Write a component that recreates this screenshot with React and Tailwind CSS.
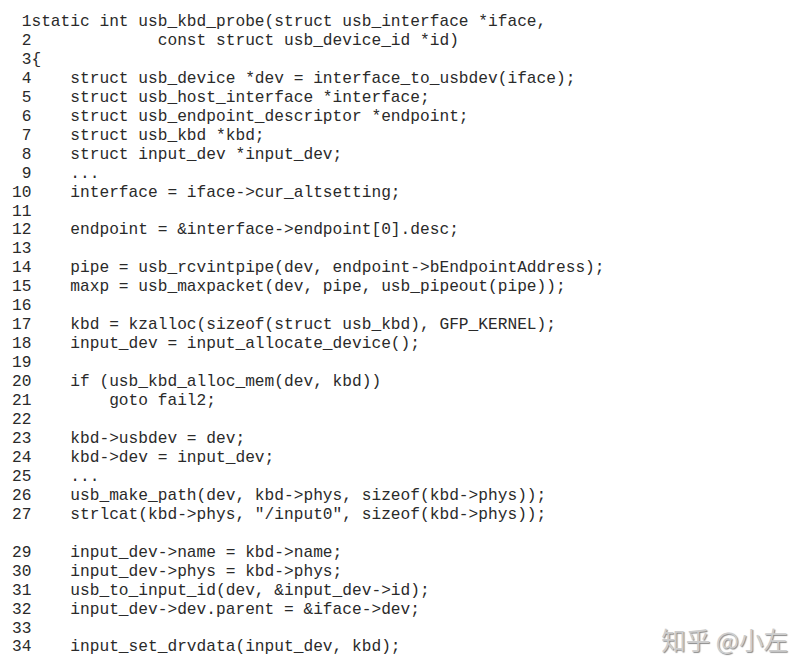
import React from "react";

const lines = [
  [1, "static int usb_kbd_probe(struct usb_interface *iface,"],
  [2, "             const struct usb_device_id *id)"],
  [3, "{"],
  [4, "    struct usb_device *dev = interface_to_usbdev(iface);"],
  [5, "    struct usb_host_interface *interface;"],
  [6, "    struct usb_endpoint_descriptor *endpoint;"],
  [7, "    struct usb_kbd *kbd;"],
  [8, "    struct input_dev *input_dev;"],
  [9, "    ..."],
  [10, "    interface = iface->cur_altsetting;"],
  [11, ""],
  [12, "    endpoint = &interface->endpoint[0].desc;"],
  [13, ""],
  [14, "    pipe = usb_rcvintpipe(dev, endpoint->bEndpointAddress);"],
  [15, "    maxp = usb_maxpacket(dev, pipe, usb_pipeout(pipe));"],
  [16, ""],
  [17, "    kbd = kzalloc(sizeof(struct usb_kbd), GFP_KERNEL);"],
  [18, "    input_dev = input_allocate_device();"],
  [19, ""],
  [20, "    if (usb_kbd_alloc_mem(dev, kbd))"],
  [21, "        goto fail2;"],
  [22, ""],
  [23, "    kbd->usbdev = dev;"],
  [24, "    kbd->dev = input_dev;"],
  [25, "    ..."],
  [26, "    usb_make_path(dev, kbd->phys, sizeof(kbd->phys));"],
  [27, '    strlcat(kbd->phys, "/input0", sizeof(kbd->phys));'],
  [null, ""],
  [29, "    input_dev->name = kbd->name;"],
  [30, "    input_dev->phys = kbd->phys;"],
  [31, "    usb_to_input_id(dev, &input_dev->id);"],
  [32, "    input_dev->dev.parent = &iface->dev;"],
  [33, ""],
  [34, "    input_set_drvdata(input_dev, kbd);"],
];

export default function App() {
  return (
    <div className="relative w-[808px] h-[671px] overflow-hidden bg-white">
      <div className="pt-[13px] pl-[12px] font-['Liberation_Mono','Courier_New',monospace] text-[16.2px] leading-[18.96px] text-[#2a2a2a]">
        {lines.map(([n, code], i) => (
          <div key={i} className="flex h-[18.96px]">
            <span className="w-[2ch] text-right shrink-0">{n ?? ""}</span>
            <span className="whitespace-pre">{code}</span>
          </div>
        ))}
      </div>

      {/* watermark */}
      <div className="absolute right-[20px] bottom-[19px] font-['Noto_Sans_CJK_SC','Noto_Sans',sans-serif] text-[24.5px] leading-none text-[#cdcdcd] [text-shadow:1px_1px_1px_#8a8a8a]">
        知乎 @小左
      </div>
    </div>
  );
}
